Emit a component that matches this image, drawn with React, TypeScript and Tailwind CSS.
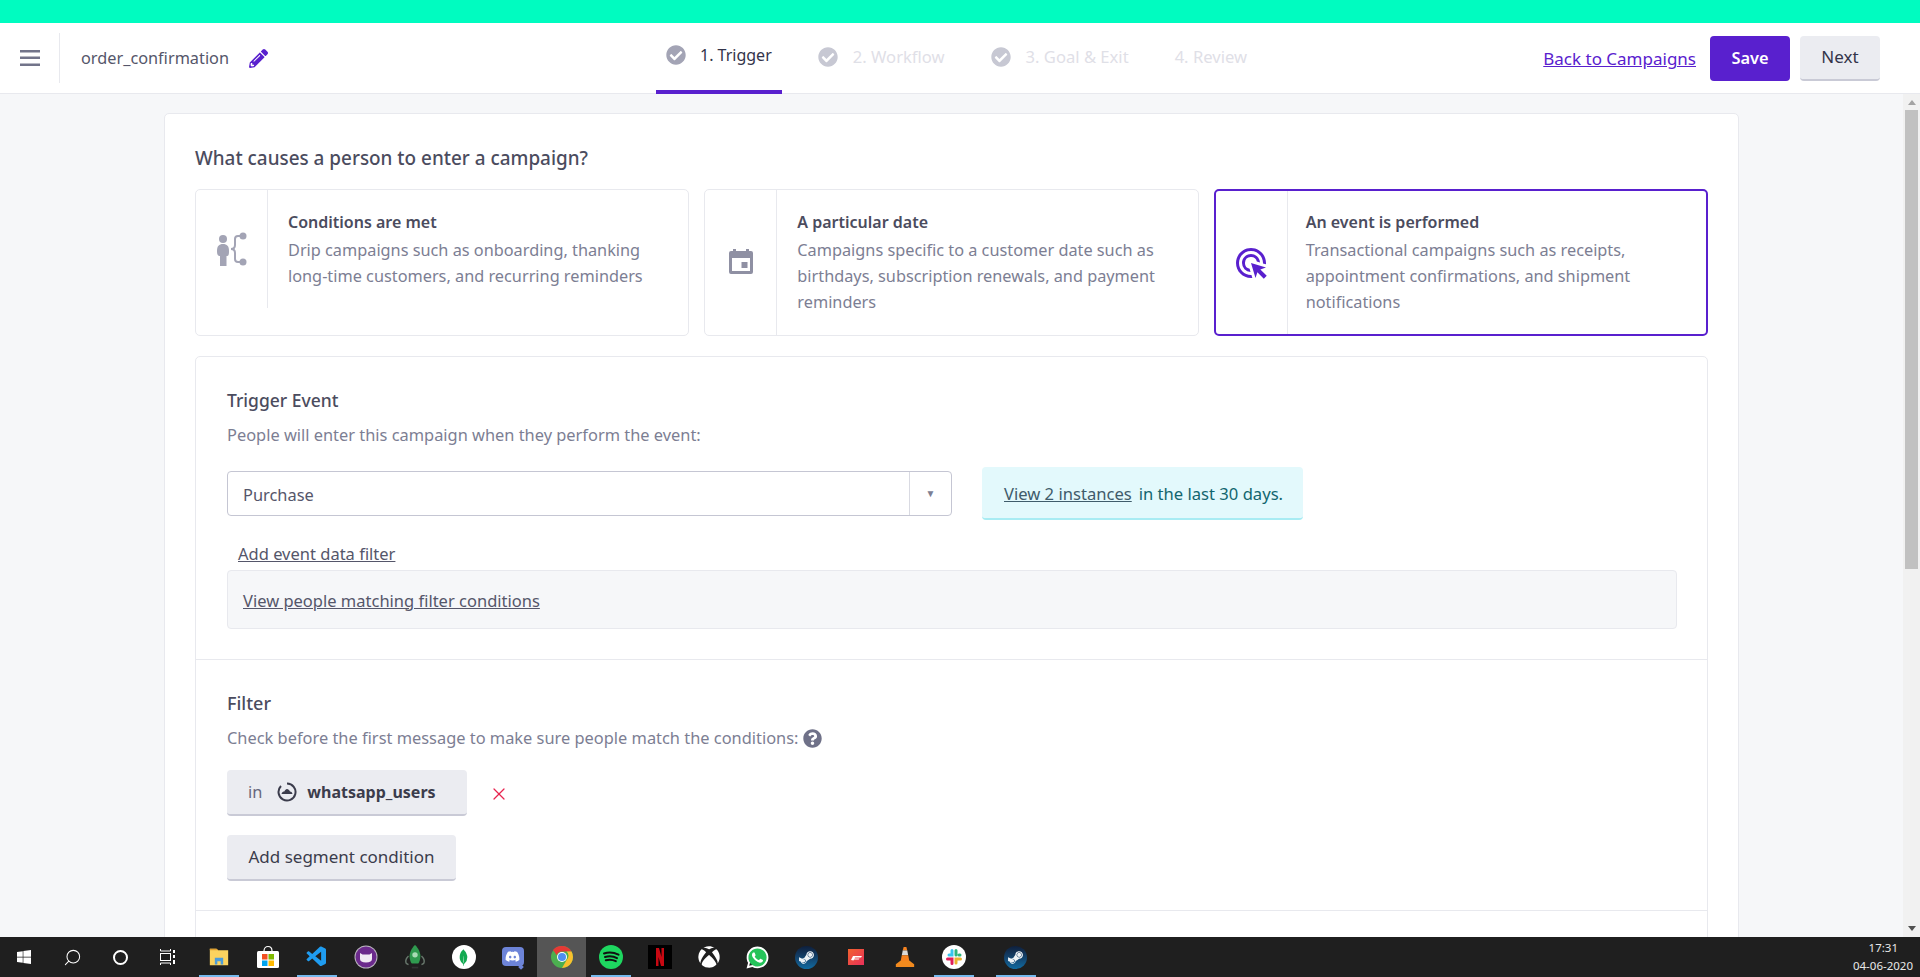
import { Search, X } from "lucide-react";
import { FaCheckCircle, FaDiscord, FaPencilAlt, FaQuestionCircle, FaSteamSymbol, FaWhatsapp, FaWindows, FaXbox } from "react-icons/fa";
import { MdAdsClick } from "react-icons/md";
import { VscVscode } from "react-icons/vsc";
import { SiMongodb } from "react-icons/si";

const tabs = [
  { label: "1. Trigger", check: true, active: true },
  { label: "2. Workflow", check: true },
  { label: "3. Goal & Exit", check: true },
  { label: "4. Review" },
];

function ConditionsIcon() {
  return (
    <svg viewBox="0 0 32 36" className="w-[32px] h-[36px]" fill="none">
      <circle cx="7" cy="8" r="4" fill="#a3a4b5" />
      <path d="M1 20c0-5 2-7 6-7s6 2 6 7-1 5-2.500 5V35H4V25c-2 0-3-1-3-5z" fill="#a3a4b5" />
      <path d="M25 5h-3c-2 0-3 1-3 3v6c0 3-1 4-4 4 3 0 4 1 4 4v6c0 2 1 3 3 3h3" stroke="#a3a4b5" strokeWidth="2" />
      <circle cx="27" cy="5" r="3.500" fill="#a3a4b5" />
      <circle cx="27" cy="31" r="3.500" fill="#a3a4b5" />
    </svg>
  );
}

function CalendarIcon() {
  return (
    <svg viewBox="0 0 24 25" className="w-[24px] h-[25px] -translate-y-[1px]">
      <path d="M4 0h3v2h10V0h3v2h2a2 2 0 0 1 2 2v19a2 2 0 0 1-2 2H2a2 2 0 0 1-2-2V4a2 2 0 0 1 2-2h2z" fill="#8f90a3" />
      <rect x="3" y="9" width="18" height="13" fill="#fff" />
      <rect x="12.500" y="13" width="6" height="6" fill="#8f90a3" />
    </svg>
  );
}

function TriggerCard({ title, lines, icon, selected, shortRule }: { title: string; lines: string[]; icon: React.ReactNode; selected?: boolean; shortRule?: boolean }) {
  return (
    <div className={selected ? "flex h-[147px] rounded-[5px] bg-white border-2 border-[#5920ce]" : "flex h-[147px] rounded-[5px] bg-white border border-[#e8e9ee]"}>
      <div className={shortRule ? "flex items-start pt-[41px] justify-center w-[72px] h-[118px] shrink-0 border-r border-[#e8e9ee]" : "flex items-center justify-center w-[72px] shrink-0 border-r border-[#e8e9ee]"}>
        {icon}
      </div>
      <div className={selected ? "pl-[18px] pt-[18px] text-[16.3px] leading-[26px]" : "pl-[20px] pt-[19px] text-[16.3px] leading-[26px]"}>
        <div className="mb-[2px] font-semibold text-[16px] text-[#4b4c5e]">{title}</div>
        {lines.map((l) => (
          <div key={l} className="text-[#7c7e93]">{l}</div>
        ))}
      </div>
    </div>
  );
}

function SegmentIcon() {
  return (
    <svg viewBox="0 0 20 20" className="w-[20px] h-[20px]" fill="none">
      <path d="M10 1.500a8.500 8.500 0 1 1-6 2.500" stroke="#3b3c4c" strokeWidth="2" />
      <path d="M4.500 12c.5-2 1.800-2.500 2.800-2.500C8 8 9 7 10 7s2.500 1 3 2.500c1.200 0 2.200.8 2.500 2.500z" fill="#3b3c4c" />
    </svg>
  );
}

function SteamBadge() {
  return (
    <div className="flex items-center justify-center w-[23px] h-[23px] rounded-full bg-gradient-to-b from-[#0e1f3c] to-[#0f6aa0]">
      <FaSteamSymbol className="w-[17px] h-[17px] text-[#eef3f6]" />
    </div>
  );
}

function TaskIcon({ children, active, current, className }: { children: React.ReactNode; active?: boolean; current?: boolean; className?: string }) {
  return (
    <div className={`relative flex items-center justify-center w-[49px] h-full ${current ? "bg-[#555555]" : ""} ${className ?? ""}`}>
      {children}
      {active && <div className="absolute bottom-0 left-1/2 -translate-x-1/2 w-[40px] h-[2px] bg-[#76b9ed]" />}
    </div>
  );
}

function Taskbar() {
  return (
    <div className="flex items-stretch h-[40px] shrink-0 bg-[#1f1f1f] text-white">
      <div className="flex w-[194px] shrink-0">
        <div className="flex items-center justify-center w-[48px]"><FaWindows className="w-[16px] h-[16px] text-white" /></div>
        <div className="flex items-center justify-center w-[48px]"><Search className="w-[19px] h-[19px] -scale-x-100" strokeWidth={1.3} /></div>
        <div className="flex items-center justify-center w-[48px]"><div className="w-[15px] h-[15px] rounded-full border-2 border-white" /></div>
        <div className="flex items-center justify-center w-[48px]">
          <svg viewBox="0 0 16 16" className="w-[16px] h-[16px]" fill="none" stroke="#fff" strokeWidth="1">
            <path d="M0.500 0v2h10V0M0.500 16v-2h10v2" />
            <rect x="0.500" y="4.500" width="10" height="7" />
            <path d="M14 1v3M14 6v3M14 11v4" strokeWidth="2" />
          </svg>
        </div>
      </div>
      <TaskIcon active>
        <svg viewBox="0 0 24 24" className="w-[22px] h-[20px]">
          <path d="M1 2h8l2 2h12v18H1z" fill="#fbd35f" />
          <path d="M1 2h8l2 2H1z" fill="#e0a030" />
          <path d="M7 21v-8h10v8h-3v-4h-4v4z" fill="#4c9cd9" />
        </svg>
      </TaskIcon>
      <TaskIcon>
        <svg viewBox="0 0 24 24" className="w-[24px] h-[24px]">
          <path d="M8 6c0-6 8-6 8 0" fill="none" stroke="#fff" strokeWidth="1.200" />
          <rect x="1" y="6" width="22" height="17" rx="1.500" fill="#fff" />
          <rect x="6" y="9" width="5.500" height="5.500" fill="#f25022" />
          <rect x="12.500" y="9" width="5.500" height="5.500" fill="#7fba00" />
          <rect x="6" y="15.500" width="5.500" height="5.500" fill="#00a4ef" />
          <rect x="12.500" y="15.500" width="5.500" height="5.500" fill="#ffb900" />
        </svg>
      </TaskIcon>
      <TaskIcon active><VscVscode className="w-[24px] h-[24px] text-[#1f9cf0]" /></TaskIcon>
      <TaskIcon>
        <svg viewBox="0 0 24 24" className="w-[24px] h-[24px]">
          <circle cx="12" cy="12" r="11.500" fill="#b9b4bd" />
          <circle cx="12" cy="12" r="10.500" fill="#6b2a8c" />
          <path d="M6 8l2.500 1.500h7L18 8v6c0 2-2 3.500-6 3.500S6 16 6 14z" fill="#f1eaf4" />
        </svg>
      </TaskIcon>
      <TaskIcon>
        <svg viewBox="0 0 24 24" className="w-[26px] h-[26px]">
          <path d="M12 1c3 2.500 5 7 5 10s-1 6-2 7H9c-1-1-2-4-2-7s2-7.500 5-10z" fill="#2f9a4f" />
          <circle cx="12" cy="10" r="2.500" fill="#a8dcb5" />
          <path d="M6 11c-2 2-3 5-2 7l2 1M18 11c2 2 3 5 2 7l-2 1" fill="none" stroke="#68776c" strokeWidth="1.300" />
          <rect x="9" y="21" width="6" height="1.500" fill="#333" />
        </svg>
      </TaskIcon>
      <TaskIcon>
        <div className="flex items-center justify-center w-[24px] h-[24px] rounded-full bg-white"><SiMongodb className="w-[17px] h-[17px] text-[#13aa52]" /></div>
      </TaskIcon>
      <TaskIcon>
        <div className="relative flex items-center justify-center w-[22px] h-[19px] rounded-[4px] bg-[#6d84d8] -translate-y-[1px]">
          <FaDiscord className="w-[15px] h-[15px] text-white" />
          <div className="absolute -bottom-[3px] right-[1px] w-[4px] h-[4px] rotate-45 bg-[#6d84d8]" />
        </div>
      </TaskIcon>
      <TaskIcon current>
        <svg viewBox="0 0 24 24" className="w-[24px] h-[24px]">
          <circle cx="12" cy="12" r="11" fill="#4caf50" />
          <path d="M12 1a11 11 0 0 1 9.500 5.500H12a5.500 5.500 0 0 0-5.200 3.700L3 5a11 11 0 0 1 9-4z" fill="#e53935" />
          <path d="M21.500 6.500A11 11 0 0 1 12 23l4.800-8.300A5.500 5.500 0 0 0 16.500 6.500z" fill="#fbc02d" />
          <circle cx="12" cy="12" r="5" fill="#fff" />
          <circle cx="12" cy="12" r="4" fill="#4f8ef0" />
        </svg>
      </TaskIcon>
      <TaskIcon active>
        <svg viewBox="0 0 24 24" className="w-[24px] h-[24px]" fill="none">
          <circle cx="12" cy="12" r="12" fill="#1ed760" />
          <path d="M5 8.500c5-1.500 10-1 14.500 1.200M6 12c4.500-1.200 8.500-.8 12 1.100M6.800 15.300c3.800-1 7-.6 10 .9" stroke="#111" strokeWidth="2" strokeLinecap="round" />
        </svg>
      </TaskIcon>
      <TaskIcon>
        <svg viewBox="0 0 24 24" className="w-[24px] h-[24px]">
          <rect width="24" height="24" fill="#000" />
          <path d="M8 3h3l2.500 9V3H16v18h-3l-2.500-9v9H8z" fill="#c70812" />
        </svg>
      </TaskIcon>
      <TaskIcon><FaXbox className="w-[22px] h-[22px] text-white" /></TaskIcon>
      <TaskIcon>
        <div className="relative flex items-center justify-center w-[25px] h-[25px]">
          <div className="absolute w-[20px] h-[20px] rounded-full bg-[#25c35a]" />
          <FaWhatsapp className="relative w-[25px] h-[25px] text-white" />
        </div>
      </TaskIcon>
      <TaskIcon><SteamBadge /></TaskIcon>
      <TaskIcon>
        <svg viewBox="0 0 16 16" className="w-[16px] h-[16px]">
          <defs>
            <linearGradient id="forza" x1="0" y1="0" x2="1" y2="1">
              <stop offset="0" stopColor="#f2622e" />
              <stop offset="1" stopColor="#e8305a" />
            </linearGradient>
          </defs>
          <rect width="16" height="16" fill="url(#forza)" />
          <path d="M3 11l2-4h9l-1 1.500H7L6.500 9.500h5l-.8 1H6L5.500 11.500z" fill="#fff" />
        </svg>
      </TaskIcon>
      <TaskIcon>
        <svg viewBox="0 0 24 24" className="w-[22px] h-[22px]">
          <path d="M10.500 1h3l1 4h-5z" fill="#f58220" />
          <path d="M9.500 5h5l1 5h-7z" fill="#d9d9d9" />
          <path d="M8.500 10h7l1.500 8H7z" fill="#f58220" />
          <path d="M7 16h10l5 4v3H2v-3z" fill="#f28a1e" />
        </svg>
      </TaskIcon>
      <TaskIcon active>
        <svg viewBox="0 0 24 24" className="w-[24px] h-[24px]" fill="none" strokeWidth="3" strokeLinecap="round">
          <circle cx="12" cy="12" r="12" fill="#fff" />
          <path d="M10 5.500v4.500H7" stroke="#36c5f0" />
          <path d="M14 5.500V10M18 10h-1" stroke="#2eb67d" />
          <path d="M18.500 14H14v4" stroke="#ecb22e" />
          <path d="M5.500 14H10v4.500" stroke="#e01e5a" />
        </svg>
      </TaskIcon>
      <TaskIcon active className="ml-[13px]"><SteamBadge /></TaskIcon>
      <div className="ml-auto pr-[7px] flex flex-col items-end justify-center text-[11.500px] leading-[18px] text-[#e8e8e8]">
        <div className="pr-[15px]">17:31</div>
        <div>04-06-2020</div>
      </div>
    </div>
  );
}

export default function App() {
  return (
    <div className="flex flex-col h-screen overflow-hidden bg-[#f6f7f9] font-['Noto_Sans',sans-serif] text-[16.4px] text-[#4b4c5e]">
      <div className="h-[23px] shrink-0 bg-[#00fcc0]" />

      <header className="flex items-stretch h-[71px] shrink-0 bg-white border-b border-[#e8e9ee]">
        <div className="flex items-center w-[656px] shrink-0">
          <div className="flex items-center justify-center w-[60px] h-[50px] border-r border-[#e8e9ee]">
            <svg viewBox="0 0 20 16" className="w-[20px] h-[16px]" fill="#72748a">
              <rect width="20" height="2.500" />
              <rect y="6.500" width="20" height="2.500" />
              <rect y="13.500" width="20" height="2.500" />
            </svg>
          </div>
          <span className="ml-[21px] pt-[1px] text-[16.3px] text-[#55566a]">order_confirmation</span>
          <FaPencilAlt className="ml-[20px] w-[19px] h-[19px] text-[#5920ce]" />
        </div>
        <nav className="flex gap-[26px]">
          {tabs.map((t) => (
            <div key={t.label} className={t.active ? "flex items-center gap-[14px] px-[10px] pb-[3px] h-[71px] border-b-4 border-[#5920ce] text-[16px] text-[#33344a]" : "flex items-center gap-[15px] px-[10px] pb-[3px] h-[71px] text-[16.6px] text-[#dfe0e7]"}>
              {t.check && <FaCheckCircle className={t.active ? "w-[20px] h-[20px] text-[#a3a4b5]" : "w-[20px] h-[20px] text-[#c7c8d3]"} />}
              <span>{t.label}</span>
            </div>
          ))}
        </nav>
        <div className="ml-auto flex items-center pr-[40px]">
          <span className="pt-[2px] text-[17px] text-[#5920ce] underline mr-[14px]">Back to Campaigns</span>
          <button className="w-[80px] h-[45px] rounded-[4px] bg-[#5920ce] text-white font-semibold">Save</button>
          <button className="ml-[10px] w-[80px] h-[45px] rounded-[4px] bg-[#ebecf1] border-b-2 border-[#c9cad6] text-[17px] text-[#33344a]">Next</button>
        </div>
      </header>

      <div className="flex flex-1 min-h-0">
        <main className="flex-1 min-w-0 overflow-hidden pt-[19px]">
          <div className="w-[1575px] mx-auto bg-white border border-[#e8e9ee] rounded-[5px] px-[30px] pt-[30px] pb-[30px]">
            <h2 className="text-[18.9px] leading-[28px] text-[#4b4c5e] font-medium">What causes a person to enter a campaign?</h2>
            <div className="grid grid-cols-3 gap-[15px] mt-[17px]">
              <TriggerCard
                shortRule
                title="Conditions are met"
                lines={["Drip campaigns such as onboarding, thanking", "long-time customers, and recurring reminders"]}
                icon={<ConditionsIcon />}
              />
              <TriggerCard
                title="A particular date"
                lines={["Campaigns specific to a customer date such as", "birthdays, subscription renewals, and payment", "reminders"]}
                icon={<CalendarIcon />}
              />
              <TriggerCard
                selected
                title="An event is performed"
                lines={["Transactional campaigns such as receipts,", "appointment confirmations, and shipment", "notifications"]}
                icon={<MdAdsClick className="w-[36px] h-[36px] text-[#5920ce]" />}
              />
            </div>

            <div className="mt-[20px] border border-[#e8e9ee] rounded-[5px]">
              <section className="pl-[31px] pr-[30px] pt-[30px] pb-[30px] border-b border-[#e8e9ee]">
                <h3 className="text-[17.5px] leading-[26px] font-medium">Trigger Event</h3>
                <p className="mt-[9px] leading-[26px] text-[#7c7e93]">People will enter this campaign when they perform the event:</p>
                <div className="flex items-center gap-[30px] mt-[19px]">
                  <div className="flex w-[725px] h-[45px] rounded-[4px] border border-[#c5c6d3] bg-white">
                    <span className="flex-1 flex items-center pl-[15px] pt-[3px] text-[#55566a]">Purchase</span>
                    <span className="flex items-center justify-center w-[42px] border-l border-[#d9dae2] text-[10px] text-[#7c7e93]">▼</span>
                  </div>
                  <div className="flex items-center h-[53px] pl-[22px] pr-[20px] pt-[3px] rounded-[4px] bg-[#e3f9fc] border-b-2 border-[#a8ecf3] text-[16.6px] text-[#12666f]">
                    <span className="underline text-[#3f5c6b]">View 2 instances</span>
                    <span className="ml-[7px]">in the last 30 days.</span>
                  </div>
                </div>
                <div className="pl-[11px] mt-[21px] text-[16.5px] leading-[26px] underline text-[#55566a]">Add event data filter</div>
                <div className="flex items-center h-[59px] mt-[3px] pl-[15px] pt-[3px] rounded-[4px] bg-[#f6f7f9] border border-[#e8e9ee]">
                  <span className="text-[16.5px] underline text-[#55566a]">View people matching filter conditions</span>
                </div>
              </section>
              <section className="pl-[31px] pr-[30px] pt-[30px] pb-[30px] h-[300px]">
                <h3 className="text-[18px] leading-[26px] font-medium">Filter</h3>
                <div className="flex items-center mt-[9px] leading-[26px] text-[#7c7e93]">
                  <span>Check before the first message to make sure people match the conditions:</span>
                  <FaQuestionCircle className="ml-[5px] w-[19px] h-[19px] text-[#6f7188]" />
                </div>
                <div className="flex items-center mt-[19px]">
                  <div className="flex items-center h-[46px] w-[240px] pl-[21px] rounded-[4px] bg-[#ebecf1] border-b-2 border-[#c9cad6]">
                    <span className="text-[#66677c]">in</span>
                    <span className="ml-[15px]"><SegmentIcon /></span>
                    <span className="ml-[10px] text-[16px] font-bold text-[#3b3c4c]">whatsapp_users</span>
                  </div>
                  <X className="ml-[22px] mt-[2px] w-[20px] h-[20px] text-[#e8244f]" strokeWidth={1.5} />
                </div>
                <button className="mt-[19px] h-[46px] w-[229px] rounded-[4px] bg-[#ebecf1] border-b-2 border-[#c9cad6] text-[17px] text-[#3b3c4c]">Add segment condition</button>
                <div className="-ml-[31px] -mr-[30px] mt-[29px] border-t border-[#e8e9ee]" />
              </section>
            </div>
          </div>
        </main>
        <div className="flex flex-col items-center w-[17px] shrink-0 bg-[#f1f1f1]">
          <svg viewBox="0 0 10 6" className="mt-[6px] w-[8px] h-[5px] shrink-0"><path d="M5 0l5 6H0z" fill="#a3a3a3" /></svg>
          <div className="mt-[5px] w-[13px] h-[459px] bg-[#c1c1c1]" />
          <svg viewBox="0 0 10 6" className="mt-auto mb-[6px] w-[8px] h-[5px] shrink-0"><path d="M0 0h10L5 6z" fill="#505050" /></svg>
        </div>
      </div>

      <Taskbar />
    </div>
  );
}
